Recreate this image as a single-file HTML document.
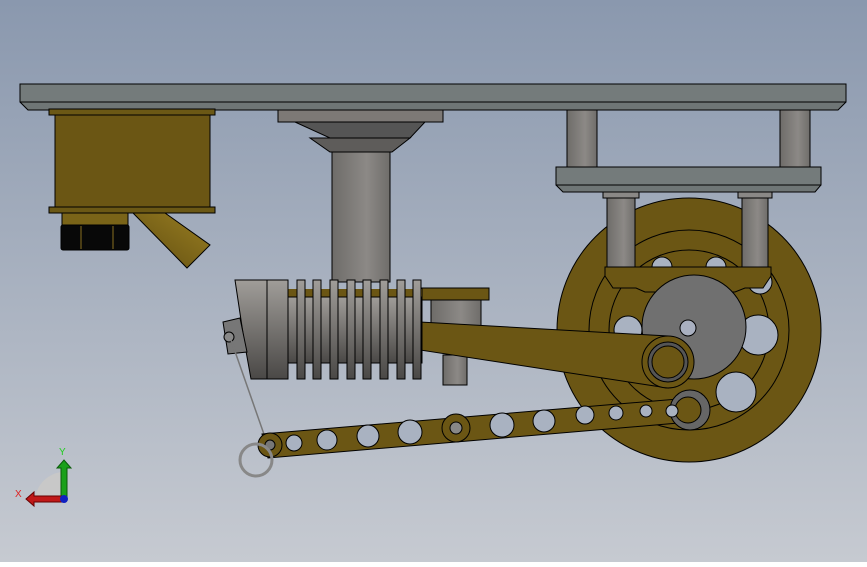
<!DOCTYPE html>
<html><head><style>html,body{margin:0;padding:0}body{width:867px;height:562px;overflow:hidden}</style></head><body>
<svg width="867" height="562" viewBox="0 0 867 562" xmlns="http://www.w3.org/2000/svg" stroke="#000" stroke-width="1">
<defs>
<linearGradient id="bg" x1="0" y1="0" x2="0" y2="1"><stop offset="0" stop-color="#8a98ae"/><stop offset="1" stop-color="#c6cad1"/></linearGradient>
<linearGradient id="col" x1="0" x2="1"><stop offset="0" stop-color="#6e6c69"/><stop offset=".6" stop-color="#8c8986"/><stop offset="1" stop-color="#6f6d6a"/></linearGradient>
<linearGradient id="cyl" x1="0" y1="0" x2="0" y2="1"><stop offset="0" stop-color="#a09d99"/><stop offset="1" stop-color="#4a4846"/></linearGradient>
<linearGradient id="pipe" x1="0" y1="1" x2="1" y2="0"><stop offset="0" stop-color="#5f4c10"/><stop offset="1" stop-color="#9a7f22"/></linearGradient>
</defs>
<rect width="867" height="562" fill="url(#bg)" stroke="none"/>
<path d="M20 84H846V102L838 110H28L20 102Z" fill="#6f7676"/>
<rect x="20" y="84" width="826" height="18" fill="#747b7b"/>
<rect x="49" y="109" width="166" height="6" fill="#6b5815"/>
<rect x="55" y="115" width="155" height="92" fill="#6b5614"/>
<rect x="49" y="207" width="166" height="6" fill="#6b5815"/>
<path d="M133 213L165 213L210 245L187 268Z" fill="url(#pipe)"/>
<rect x="62" y="213" width="66" height="12" fill="#7a6418"/>
<rect x="61" y="225" width="68" height="25" rx="2" fill="#080808"/>
<line x1="81" y1="226" x2="81" y2="249" stroke="#8a7020"/><line x1="113" y1="226" x2="113" y2="249" stroke="#8a7020"/>
<rect x="278" y="110" width="165" height="12" fill="#7d7976"/>
<path d="M295 122H425L410 138H330Z" fill="#555"/>
<path d="M310 138H410L392 152H330Z" fill="#5e5c5a"/>
<rect x="332" y="152" width="58" height="130" fill="url(#col)"/>
<rect x="567" y="110" width="30" height="57" fill="url(#col)"/>
<rect x="780" y="110" width="30" height="57" fill="url(#col)"/>
<circle cx="689" cy="330" r="132" fill="#6b5614"/>
<circle cx="689" cy="330" r="100" fill="none"/>
<circle cx="689" cy="330" r="80" fill="none"/>
<g fill="#a9b2c1">
<circle cx="758" cy="335" r="20"/><circle cx="736" cy="392" r="20"/><circle cx="760" cy="282" r="12"/><circle cx="662" cy="267" r="10"/><circle cx="716" cy="267" r="10"/><circle cx="628" cy="330" r="14"/>
</g>
<path d="M556 167H821V185L815 192H563L556 185Z" fill="#6f7676"/>
<rect x="556" y="167" width="265" height="18" fill="#747b7b"/>
<rect x="607" y="192" width="28" height="78" fill="url(#col)"/>
<rect x="742" y="192" width="26" height="78" fill="url(#col)"/>
<rect x="603" y="192" width="36" height="6" fill="#8a8886"/><rect x="738" y="192" width="34" height="6" fill="#8a8886"/>
<path d="M605 267H771V276L763 288H745L735 292H645L636 288H613L605 276Z" fill="#6b5614"/>
<circle cx="694" cy="327" r="52" fill="#707070"/>
<circle cx="688" cy="328" r="8" fill="#a9b0c0"/>
<rect x="422" y="288" width="67" height="12" fill="#6b5614"/>
<rect x="431" y="300" width="50" height="30" fill="url(#col)"/>
<rect x="443" y="355" width="24" height="30" fill="url(#col)"/>
<path d="M420 322L668 336L668 388L420 350Z" fill="#6b5614"/>
<circle cx="668" cy="362" r="26" fill="#6b5614"/>
<circle cx="668" cy="362" r="20" fill="#555"/>
<circle cx="668" cy="362" r="16" fill="#6b5614"/>
<rect x="288" y="289" width="134" height="8" fill="#6b5614" stroke="none"/>
<rect x="288" y="297" width="134" height="66" fill="url(#cyl)"/>
<path d="M235 280H288V379H251L244 340Z" fill="url(#cyl)"/>
<line x1="267" y1="280" x2="267" y2="379"/>
<g fill="url(#cyl)">
<rect x="297" y="280" width="8" height="99"/><rect x="313" y="280" width="8" height="99"/><rect x="330" y="280" width="8" height="99"/><rect x="347" y="280" width="8" height="99"/><rect x="363" y="280" width="8" height="99"/><rect x="380" y="280" width="8" height="99"/><rect x="397" y="280" width="8" height="99"/><rect x="413" y="280" width="8" height="99"/>
</g>
<path d="M223 322L240 318L247 352L228 354Z" fill="#777"/>
<circle cx="229" cy="337" r="5" fill="#888"/>
<line x1="231" y1="340" x2="266" y2="440" stroke="#777" stroke-width="1.5"/>
<path d="M262 434L690 398L690 422L268 458Z" fill="#6b5614"/>
<circle cx="270" cy="445" r="12" fill="#6b5614"/>
<circle cx="270" cy="445" r="5" fill="#777"/>
<circle cx="256" cy="460" r="16" fill="none" stroke="#888" stroke-width="3"/>
<g fill="#a9b2c1">
<circle cx="294" cy="443" r="8"/><circle cx="327" cy="440" r="10"/><circle cx="368" cy="436" r="11"/><circle cx="410" cy="432" r="12"/><circle cx="502" cy="425" r="12"/><circle cx="544" cy="421" r="11"/><circle cx="585" cy="415" r="9"/><circle cx="616" cy="413" r="7"/><circle cx="646" cy="411" r="6"/>
</g>
<circle cx="456" cy="428" r="14" fill="#6b5614"/><circle cx="456" cy="428" r="6" fill="#888"/>
<circle cx="690" cy="410" r="20" fill="#666"/><circle cx="688" cy="410" r="13" fill="#6b5614"/>
<circle cx="672" cy="411" r="6" fill="#a9b2c1"/>
<path d="M35 500A30 30 0 0 1 62 472V500Z" fill="#c8c8c8" stroke="none"/>
<path d="M61 498V468H57L64 460L71 468H67V498Z" fill="#1aa01a" stroke="#0a5a0a"/>
<path d="M64 496H34V492L26 499L34 506V502H64Z" fill="#c01818" stroke="#600"/>
<circle cx="64" cy="499" r="4" fill="#1020c0" stroke="none"/>
<text x="59" y="455" font-family="Liberation Sans, sans-serif" font-size="10" fill="#2c2" stroke="none">Y</text>
<text x="15" y="497" font-family="Liberation Sans, sans-serif" font-size="10" fill="#d22" stroke="none">X</text>
</svg>
</body></html>
